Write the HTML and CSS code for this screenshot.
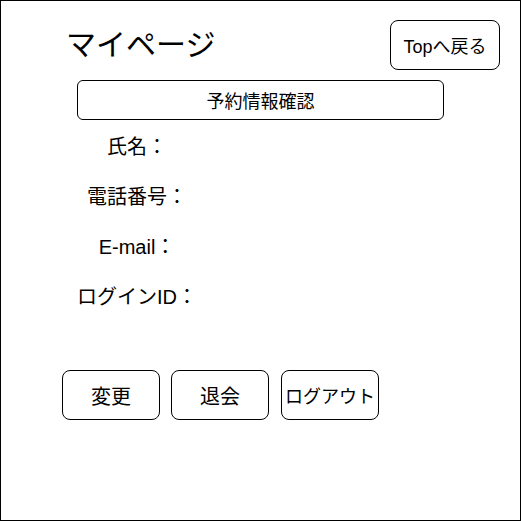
FILE: index.html
```html
<!DOCTYPE html>
<html lang="ja">
<head>
  <meta charset="UTF-8" />
  <meta name="viewport" content="width=device-width, initial-scale=1" />
  <title>マイページ</title>
  <link rel="stylesheet" href="styles.css">
</head>
<body>
  <div class="page">
    <header class="top">
      <h1>マイページ</h1>
      <button class="backBtn">Topへ戻る</button>
    </header>

    <button class="reserveBtn">予約情報確認</button>

    <div class="info">
      <div class="row">氏名：</div>
      <div class="row">電話番号：</div>
      <div class="row">E-mail：</div>
      <div class="row">ログインID：</div>
    </div>

    <div class="actions">
      <button class="actBtn">変更</button>
      <button class="actBtn">退会</button>
      <button class="actBtn small">ログアウト</button>
    </div>
  </div>
</body>
</html>
```

FILE: styles.css
```css
body {
  margin: 0;
  padding: 0;
  background: #fff;
  color: #000;
  font-family: 'Liberation Sans', 'Noto Sans CJK JP', sans-serif;
}

.page {
  box-sizing: border-box;
  width: 521px;
  height: 521px;
  border: 1px solid #000;
  padding: 19px 20px 0 0;
}

.top {
  display: flex;
  align-items: center;
  height: 50px;
}

h1 {
  margin: 0 0 0 65px;
  font-size: 30px;
  font-weight: 400;
  line-height: 30px;
}

button {
  font-family: inherit;
  color: #000;
  background: #fff;
  border: 1px solid #000;
  border-radius: 8px;
  padding: 0;
  cursor: pointer;
}

.backBtn {
  margin-left: auto;
  width: 110px;
  height: 50px;
  font-size: 18px;
}

.reserveBtn {
  display: block;
  margin: 10px 0 0 76px;
  width: 367px;
  height: 40px;
  font-size: 18px;
  border-radius: 6px;
}

.info {
  margin: 0 0 0 75px;
  width: 122px;
}

.row {
  height: 50px;
  display: flex;
  align-items: center;
  justify-content: center;
  font-size: 20px;
  white-space: nowrap;
}

.actions {
  display: flex;
  gap: 11px;
  margin: 50px 0 0 61px;
}

.actBtn {
  width: 98px;
  height: 50px;
  font-size: 20px;
}

.actBtn.small {
  font-size: 18px;
  margin-left: 1px;
}
```
